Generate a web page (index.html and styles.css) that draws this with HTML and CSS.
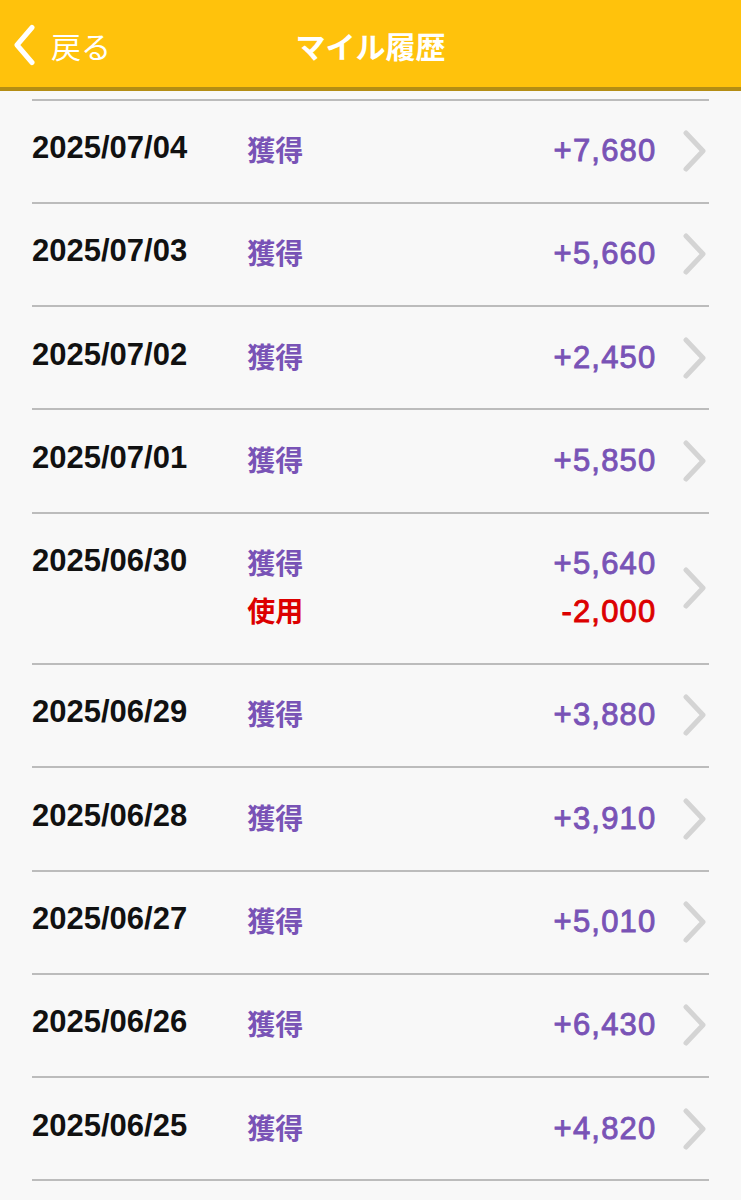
FILE: index.html
```html
<!DOCTYPE html>
<html lang="ja">
<head>
<meta charset="utf-8">
<title>マイル履歴</title>
<link rel="stylesheet" href="styles.css">
</head>
<body>
<header class="appbar">
  <a class="back" href="#">
    <svg class="back-icon" width="22" height="42" viewBox="0 0 22 42" aria-hidden="true"><polyline points="19,3.5 4,21 19,38.5" fill="none" stroke="#fff" stroke-width="5" stroke-linecap="round" stroke-linejoin="round"/></svg>
    <span class="back-text">戻る</span>
  </a>
  <h1 class="title">マイル履歴</h1>
  <div class="spacer"></div>
</header>
<main class="content">
  <ul class="history">
    <li class="row">
      <span class="date">2025/07/04</span>
      <div class="labels"><span class="gain">獲得</span></div>
      <div class="amounts"><span class="gain">+7,680</span></div>
      <svg class="chev" width="23" height="42" viewBox="0 0 23 42" aria-hidden="true"><polyline points="3,3 20,21 3,39" fill="none" stroke="#d4d4d4" stroke-width="5" stroke-linecap="round" stroke-linejoin="round"/></svg>
    </li>
    <li class="row">
      <span class="date">2025/07/03</span>
      <div class="labels"><span class="gain">獲得</span></div>
      <div class="amounts"><span class="gain">+5,660</span></div>
      <svg class="chev" width="23" height="42" viewBox="0 0 23 42" aria-hidden="true"><polyline points="3,3 20,21 3,39" fill="none" stroke="#d4d4d4" stroke-width="5" stroke-linecap="round" stroke-linejoin="round"/></svg>
    </li>
    <li class="row">
      <span class="date">2025/07/02</span>
      <div class="labels"><span class="gain">獲得</span></div>
      <div class="amounts"><span class="gain">+2,450</span></div>
      <svg class="chev" width="23" height="42" viewBox="0 0 23 42" aria-hidden="true"><polyline points="3,3 20,21 3,39" fill="none" stroke="#d4d4d4" stroke-width="5" stroke-linecap="round" stroke-linejoin="round"/></svg>
    </li>
    <li class="row">
      <span class="date">2025/07/01</span>
      <div class="labels"><span class="gain">獲得</span></div>
      <div class="amounts"><span class="gain">+5,850</span></div>
      <svg class="chev" width="23" height="42" viewBox="0 0 23 42" aria-hidden="true"><polyline points="3,3 20,21 3,39" fill="none" stroke="#d4d4d4" stroke-width="5" stroke-linecap="round" stroke-linejoin="round"/></svg>
    </li>
    <li class="row">
      <span class="date">2025/06/30</span>
      <div class="labels"><span class="gain">獲得</span><span class="use">使用</span></div>
      <div class="amounts"><span class="gain">+5,640</span><span class="use">-2,000</span></div>
      <svg class="chev" width="23" height="42" viewBox="0 0 23 42" aria-hidden="true"><polyline points="3,3 20,21 3,39" fill="none" stroke="#d4d4d4" stroke-width="5" stroke-linecap="round" stroke-linejoin="round"/></svg>
    </li>
    <li class="row">
      <span class="date">2025/06/29</span>
      <div class="labels"><span class="gain">獲得</span></div>
      <div class="amounts"><span class="gain">+3,880</span></div>
      <svg class="chev" width="23" height="42" viewBox="0 0 23 42" aria-hidden="true"><polyline points="3,3 20,21 3,39" fill="none" stroke="#d4d4d4" stroke-width="5" stroke-linecap="round" stroke-linejoin="round"/></svg>
    </li>
    <li class="row">
      <span class="date">2025/06/28</span>
      <div class="labels"><span class="gain">獲得</span></div>
      <div class="amounts"><span class="gain">+3,910</span></div>
      <svg class="chev" width="23" height="42" viewBox="0 0 23 42" aria-hidden="true"><polyline points="3,3 20,21 3,39" fill="none" stroke="#d4d4d4" stroke-width="5" stroke-linecap="round" stroke-linejoin="round"/></svg>
    </li>
    <li class="row">
      <span class="date">2025/06/27</span>
      <div class="labels"><span class="gain">獲得</span></div>
      <div class="amounts"><span class="gain">+5,010</span></div>
      <svg class="chev" width="23" height="42" viewBox="0 0 23 42" aria-hidden="true"><polyline points="3,3 20,21 3,39" fill="none" stroke="#d4d4d4" stroke-width="5" stroke-linecap="round" stroke-linejoin="round"/></svg>
    </li>
    <li class="row">
      <span class="date">2025/06/26</span>
      <div class="labels"><span class="gain">獲得</span></div>
      <div class="amounts"><span class="gain">+6,430</span></div>
      <svg class="chev" width="23" height="42" viewBox="0 0 23 42" aria-hidden="true"><polyline points="3,3 20,21 3,39" fill="none" stroke="#d4d4d4" stroke-width="5" stroke-linecap="round" stroke-linejoin="round"/></svg>
    </li>
    <li class="row">
      <span class="date">2025/06/25</span>
      <div class="labels"><span class="gain">獲得</span></div>
      <div class="amounts"><span class="gain">+4,820</span></div>
      <svg class="chev" width="23" height="42" viewBox="0 0 23 42" aria-hidden="true"><polyline points="3,3 20,21 3,39" fill="none" stroke="#d4d4d4" stroke-width="5" stroke-linecap="round" stroke-linejoin="round"/></svg>
    </li>
  </ul>
</main>
</body>
</html>
```
FILE: styles.css
```css
* {
  box-sizing: border-box;
}

html, body {
  margin: 0;
  padding: 0;
  background: #f8f8f8;
}

body {
  font-family: "Liberation Sans", "Noto Sans CJK JP", sans-serif;
  color: #111;
  overflow: hidden;
}

.appbar {
  height: 91px;
  background: #ffc20c;
  border-bottom: 4px solid #b48d14;
  display: grid;
  grid-template-columns: 1fr auto 1fr;
  align-items: center;
  padding-top: 2px;
}

.back {
  display: flex;
  align-items: center;
  gap: 16px;
  padding-left: 13px;
  color: #fff;
  text-decoration: none;
}

.back-icon {
  display: block;
  flex: none;
}

.back-text {
  font-family: "Noto Sans CJK JP", sans-serif;
  font-size: 30px;
  font-weight: 400;
  line-height: 1;
}

.title {
  margin: 0;
  font-family: "Noto Sans CJK JP", sans-serif;
  font-size: 30px;
  font-weight: 700;
  color: #fff;
  line-height: 1;
}

.content {
  padding: 7.5px 32px 0;
}

.history {
  list-style: none;
  margin: 0;
  padding: 0;
  border-top: 2px solid #bcbcbc;
}

.row {
  display: flex;
  align-items: flex-start;
  padding: 26.5px 0 26.8px;
  border-bottom: 2px solid #bcbcbc;
}

.date {
  font-family: "Liberation Sans", sans-serif;
  font-size: 31px;
  font-weight: 700;
  line-height: 42px;
  color: #111;
  flex: none;
}

.labels {
  display: flex;
  flex-direction: column;
  gap: 4px;
  margin-left: 60px;
  font-family: "Noto Sans CJK JP", sans-serif;
  font-size: 28px;
  font-weight: 700;
  line-height: 44px;
}

.amounts {
  display: flex;
  flex-direction: column;
  align-items: flex-end;
  margin-left: auto;
  font-family: "Liberation Sans", sans-serif;
  font-size: 31px;
  font-weight: 400;
  letter-spacing: 1.2px;
  -webkit-text-stroke: 0.9px currentColor;
  line-height: 48px;
}

.gain {
  color: #7953b6;
}

.use {
  color: #dc0000;
}

.chev {
  display: block;
  flex: none;
  align-self: center;
  margin-left: 26px;
  margin-right: 3.5px;
}
```
